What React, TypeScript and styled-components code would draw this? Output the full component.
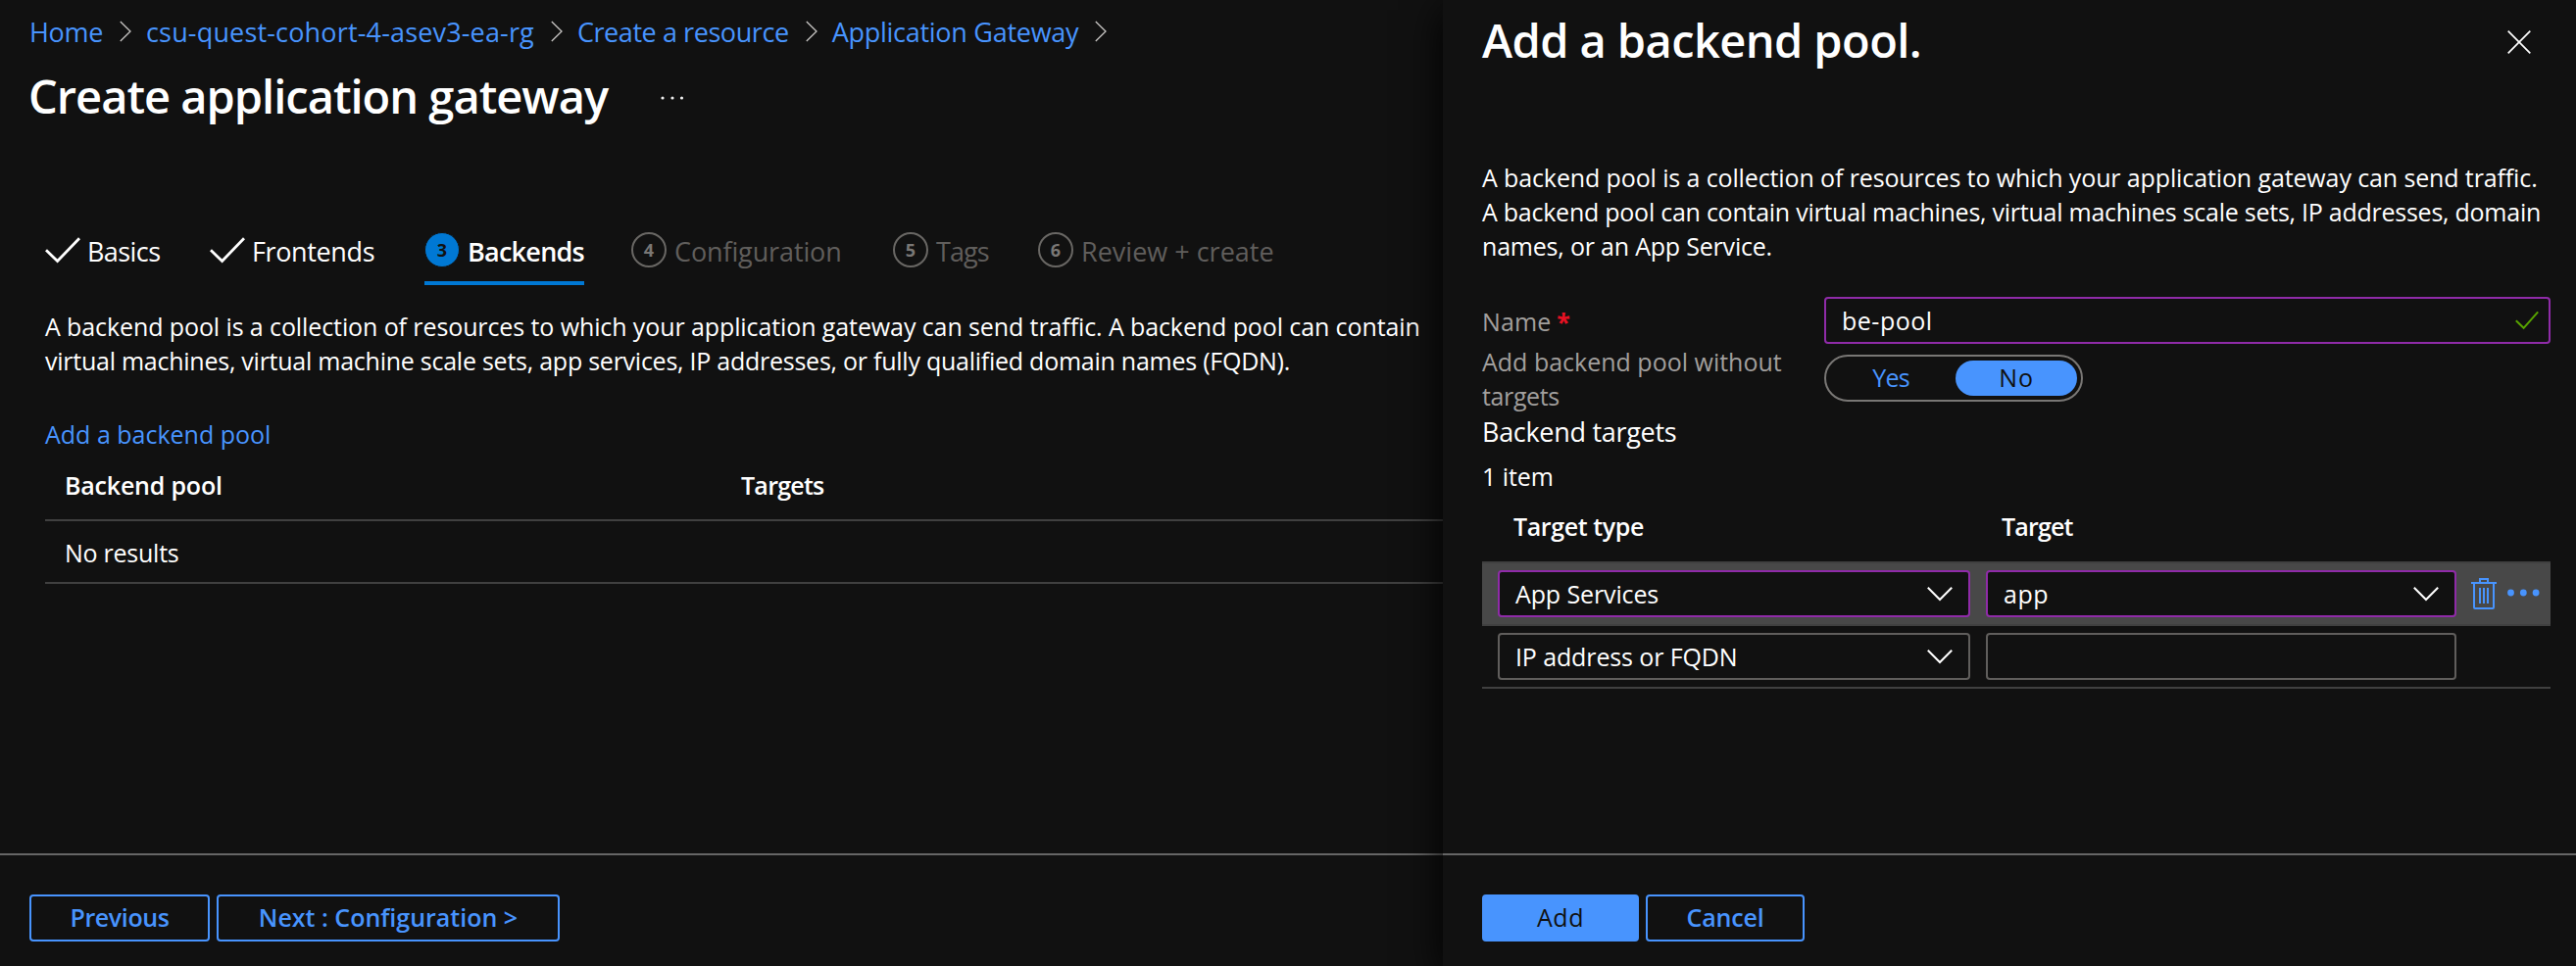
import React from "react";
import styled, { createGlobalStyle } from "styled-components";

const GlobalStyle = createGlobalStyle`
  * { box-sizing: border-box; }
  body {
    margin: 0;
    background: #111111;
    color: #ffffff;
    font: 400 25px/35px "Open Sans", "Noto Sans", sans-serif;
    overflow: hidden;
  }
`;

const Page = styled.div`
  display: flex;
  width: 2628px;
  height: 986px;
`;

const Blade = styled.main`
  display: flex;
  flex-direction: column;
  width: 1472px;
  padding-top: 14px;
`;

const ContextPane = styled.aside`
  position: relative;
  z-index: 1;
  display: flex;
  flex-direction: column;
  width: 1156px;
  padding-top: 9px;
  background: #111111;
  box-shadow: 0 10px 38px rgba(0, 0, 0, 1);
`;

const Text = styled.span<{ $ls?: number }>`
  letter-spacing: ${(p) => p.$ls ?? 0}px;
  white-space: nowrap;
`;

const Breadcrumb = styled.nav`
  display: flex;
  align-items: center;
  height: 38px;
  padding-left: 30px;
  font-size: 27px;
  line-height: 38px;
  color: #4894fe;

  svg {
    margin: -2px 15px 0 17px;
  }
`;

const Crumb = styled.div`
  display: flex;
  align-items: center;
`;

const TitleRow = styled.div`
  display: flex;
  align-items: center;
  height: 64px;
  margin-top: 14px;
  padding-left: 29px;
  gap: 54px;

  svg {
    margin-top: 4px;
  }
`;

const Title = styled.h1<{ $ls: number }>`
  margin: 0;
  font-size: 47px;
  font-weight: 600;
  line-height: 64px;
  letter-spacing: ${(p) => p.$ls}px;
  white-space: nowrap;
`;

const Tabs = styled.div`
  display: flex;
  gap: 48px;
  margin: 106px 0 0 46px;
`;

const Tab = styled.div<{ $width: number; $state: "done" | "active" | "disabled" }>`
  display: flex;
  gap: ${(p) => (p.$state === "done" ? 7 : 8)}px;
  width: ${(p) => p.$width}px;
  height: 55px;
  border-bottom: 4px solid ${(p) => (p.$state === "active" ? "#0078d4" : "transparent")};
  color: ${(p) => (p.$state === "disabled" ? "#605e5c" : "#ffffff")};
  font-size: 27px;
  font-weight: ${(p) => (p.$state === "active" ? 600 : 400)};
  line-height: 42px;
  white-space: nowrap;

  > svg {
    margin-top: 6px;
  }
`;

const StepNumber = styled.span<{ $active: boolean }>`
  display: flex;
  flex: none;
  align-items: center;
  justify-content: center;
  width: 36px;
  height: 36px;
  margin-top: 1px;
  border: ${(p) => (p.$active ? "1px solid #111111" : "2px solid #696764")};
  border-radius: 50%;
  background: ${(p) => (p.$active ? "#0078d4" : "transparent")};
  color: ${(p) => (p.$active ? "#111111" : "#797775")};
  font-size: 18px;
  font-weight: 700;
  line-height: 24px;
`;

const Intro = styled.p`
  display: flex;
  flex-direction: column;
  margin: 25px 0 0 46px;
`;

const AddLink = styled.a`
  margin: 40px 0 0 46px;
  color: #4894fe;
`;

const PoolTable = styled.div`
  margin: 17px 0 0 46px;
`;

const PoolHeader = styled.div`
  display: grid;
  grid-template-columns: 690px 1fr;
  height: 54px;
  padding-left: 20px;
  border-bottom: 2px solid #404040;
  font-weight: 600;
`;

const PoolRow = styled.div`
  height: 64px;
  padding: 15px 0 0 20px;
  border-bottom: 2px solid #404040;
`;

const Footer = styled.footer<{ $inset: number }>`
  display: flex;
  gap: 7px;
  height: 115px;
  margin-top: auto;
  padding: 40px 0 0 ${(p) => p.$inset}px;
  border-top: 2px solid #666666;
`;

const Button = styled.button<{ $width: number; $primary?: boolean; $ls?: number }>`
  width: ${(p) => p.$width}px;
  height: 48px;
  padding: 0 0 3px;
  border: 2px solid #4894fe;
  border-radius: 4px;
  background: ${(p) => (p.$primary ? "#4894fe" : "transparent")};
  color: ${(p) => (p.$primary ? "#111111" : "#4894fe")};
  font: ${(p) => (p.$primary ? 500 : 600)} 25px/40px "Open Sans", "Noto Sans", sans-serif;
  letter-spacing: ${(p) => p.$ls ?? 0}px;
`;

const PaneHeader = styled.header`
  display: flex;
  justify-content: space-between;
  align-items: flex-start;
  height: 64px;
  padding: 0 46px 0 40px;

  svg {
    margin-top: 22px;
  }
`;

const PaneBody = styled.section`
  width: 1090px;
  margin: 91px 0 0 40px;
`;

const Description = styled.p`
  display: flex;
  flex-direction: column;
  margin: 0 0 34px;
`;

const Field = styled.div`
  display: grid;
  grid-template-columns: 349px 1fr;
  align-items: start;
`;

const Label = styled.label<{ $top?: number }>`
  display: flex;
  flex-direction: column;
  padding-top: ${(p) => p.$top ?? 0}px;
  color: #a19f9d;
`;

const Required = styled.span`
  margin-left: 6px;
  color: #e81123;
  font-weight: 700;
`;

const Control = styled.div<{ $width: number; $dirty?: boolean; $pad?: number }>`
  display: flex;
  flex: none;
  align-items: center;
  justify-content: space-between;
  width: ${(p) => p.$width}px;
  height: 48px;
  padding: 0 16px 0 ${(p) => p.$pad ?? 16}px;
  border: 2px solid ${(p) => (p.$dirty ? "#8f2ba8" : "#605e5c")};
  border-radius: 4px;
  background: #111111;
`;

const NameControl = styled(Control)`
  padding-right: 10px;
`;

const Toggle = styled.div`
  display: flex;
  gap: 4px;
  width: 264px;
  height: 48px;
  margin-top: 10px;
  padding: 4px;
  border: 2px solid #797775;
  border-radius: 24px;
`;

const ToggleOption = styled.div<{ $on?: boolean }>`
  width: 124px;
  height: 36px;
  border-radius: 18px;
  background: ${(p) => (p.$on ? "#4894fe" : "transparent")};
  color: ${(p) => (p.$on ? "#111111" : "#4894fe")};
  line-height: 35px;
  text-align: center;
`;

const SecondField = styled(Field)`
  margin-top: 1px;
`;

const SectionTitle = styled.div`
  margin-top: 1px;
  font-size: 27px;
  line-height: 36px;
`;

const ItemCount = styled.div`
  margin-top: 10px;
`;

const TargetHeader = styled.div`
  display: grid;
  grid-template-columns: 498px 1fr;
  height: 53px;
  margin-top: 16px;
  padding-left: 32px;
  font-weight: 600;
`;

const TargetRow = styled.div<{ $selected?: boolean }>`
  display: flex;
  gap: 16px;
  padding: 7px 0 7px 16px;
  border-top: ${(p) => (p.$selected ? "2px solid #404040" : "none")};
  border-bottom: 2px solid #404040;
  background: ${(p) => (p.$selected ? "#484848" : "transparent")};
`;

const RowActions = styled.div`
  display: flex;
  gap: 11px;
  height: 48px;
  margin-left: -1px;
  padding-top: 8px;

  svg + svg {
    margin-top: 11px;
  }
`;

const CrumbChevron = () => (
  <svg width="12" height="22" viewBox="0 0 12 22" fill="none" stroke="#c8c6c4" strokeWidth="1.3">
    <path d="M.8 1 11 11 .8 21" />
  </svg>
);

const DoneCheck = () => (
  <svg width="36" height="27" viewBox="0 0 36 27" fill="none" stroke="#fff" strokeWidth="2.8">
    <path d="M1 13.2 12.6 24.5 35 1.2" />
  </svg>
);

const DropChevron = () => (
  <svg width="26" height="16" viewBox="0 0 26 16" fill="none" stroke="#fff" strokeWidth="2">
    <path d="M.8 1.8 13 14 25.2 1.8" />
  </svg>
);

const ValidCheck = () => (
  <svg width="24" height="20" viewBox="0 0 24 20" fill="none" stroke="#57a300" strokeWidth="2">
    <path d="M.8 10.2 8.6 17.8 23.2 1.4" />
  </svg>
);

const CloseIcon = () => (
  <svg width="24" height="24" viewBox="0 0 24 24" fill="none" stroke="#fff" strokeWidth="1.7">
    <path d="M.7.7 23.3 23.3M23.3.7.7 23.3" />
  </svg>
);

const TitleDots = () => (
  <svg width="24" height="4" viewBox="0 0 24 4" fill="#f0f0f0">
    <circle cx="2" cy="2" r="1.6" />
    <circle cx="12" cy="2" r="1.6" />
    <circle cx="21.5" cy="2" r="1.6" />
  </svg>
);

const TrashIcon = () => (
  <svg width="26" height="32" viewBox="0 0 26 32" fill="none" stroke="#4894fe" strokeWidth="2">
    <path d="M0 5h26M9 4V1h8v3M3 6v24q0 1 1 1h18q1 0 1-1V6M9 10v16M13 10v16M17 10v16" />
  </svg>
);

const MoreIcon = () => (
  <svg width="33" height="8" viewBox="0 0 33 8" fill="#4894fe">
    <circle cx="3.5" cy="4" r="3.4" />
    <circle cx="16.3" cy="4" r="3.4" />
    <circle cx="29.1" cy="4" r="3.4" />
  </svg>
);

const crumbs = [
  { label: "Home", ls: -0.32 },
  { label: "csu-quest-cohort-4-asev3-ea-rg", ls: 0.16 },
  { label: "Create a resource", ls: -0.43 },
  { label: "Application Gateway", ls: -0.27 },
];

const steps = [
  { label: "Basics", state: "done", width: 120, ls: -0.57 },
  { label: "Frontends", state: "done", width: 171, ls: -0.37 },
  { label: "Backends", state: "active", width: 163, ls: -0.75 },
  { label: "Configuration", state: "disabled", width: 219, ls: -0.12 },
  { label: "Tags", state: "disabled", width: 100, ls: -0.94 },
  { label: "Review + create", state: "disabled", width: 240, ls: 0 },
] as const;

export default function App() {
  return (
    <>
      <GlobalStyle />
      <Page>
        <Blade>
          <Breadcrumb>
            {crumbs.map((c) => (
              <Crumb key={c.label}>
                <Text $ls={c.ls}>{c.label}</Text>
                <CrumbChevron />
              </Crumb>
            ))}
          </Breadcrumb>
          <TitleRow>
            <Title $ls={-1}>Create application gateway</Title>
            <TitleDots />
          </TitleRow>
          <Tabs>
            {steps.map((s, i) => (
              <Tab key={s.label} $width={s.width} $state={s.state}>
                {s.state === "done" ? (
                  <DoneCheck />
                ) : (
                  <StepNumber $active={s.state === "active"}>{i + 1}</StepNumber>
                )}
                <Text $ls={s.ls}>{s.label}</Text>
              </Tab>
            ))}
          </Tabs>
          <Intro>
            <Text $ls={-0.1}>
              A backend pool is a collection of resources to which your application gateway can send traffic. A backend pool can contain
            </Text>
            <Text $ls={-0.25}>
              virtual machines, virtual machine scale sets, app services, IP addresses, or fully qualified domain names (FQDN).
            </Text>
          </Intro>
          <AddLink>
            <Text $ls={0}>Add a backend pool</Text>
          </AddLink>
          <PoolTable>
            <PoolHeader>
              <Text $ls={-0.2}>Backend pool</Text>
              <Text $ls={-0.75}>Targets</Text>
            </PoolHeader>
            <PoolRow>
              <Text $ls={-0.25}>No results</Text>
            </PoolRow>
          </PoolTable>
          <Footer $inset={30}>
            <Button $width={184} $ls={-0.4}>Previous</Button>
            <Button $width={350} $ls={0}>Next : Configuration &gt;</Button>
          </Footer>
        </Blade>

        <ContextPane>
          <PaneHeader>
            <Title $ls={-0.58}>Add a backend pool.</Title>
            <CloseIcon />
          </PaneHeader>
          <PaneBody>
            <Description>
              <Text $ls={-0.12}>
                A backend pool is a collection of resources to which your application gateway can send traffic.
              </Text>
              <Text $ls={-0.25}>
                A backend pool can contain virtual machines, virtual machines scale sets, IP addresses, domain
              </Text>
              <Text $ls={-0.2}>names, or an App Service.</Text>
            </Description>
            <Field>
              <Label $top={8}>
                <Text $ls={0.1}>
                  Name<Required>*</Required>
                </Text>
              </Label>
              <NameControl $width={741} $dirty>
                <Text $ls={0.5}>be-pool</Text>
                <ValidCheck />
              </NameControl>
            </Field>
            <SecondField>
              <Label>
                <Text $ls={0}>Add backend pool without</Text>
                <Text $ls={-0.37}>targets</Text>
              </Label>
              <Toggle>
                <ToggleOption>
                  <Text $ls={-0.8}>Yes</Text>
                </ToggleOption>
                <ToggleOption $on>
                  <Text $ls={0.8}>No</Text>
                </ToggleOption>
              </Toggle>
            </SecondField>
            <SectionTitle>
              <Text $ls={-0.3}>Backend targets</Text>
            </SectionTitle>
            <ItemCount>
              <Text $ls={-0.07}>1 item</Text>
            </ItemCount>
            <TargetHeader>
              <Text $ls={-0.4}>Target type</Text>
              <Text $ls={-0.84}>Target</Text>
            </TargetHeader>
            <TargetRow $selected>
              <Control $width={482} $dirty>
                <Text $ls={-0.12}>App Services</Text>
                <DropChevron />
              </Control>
              <Control $width={480} $dirty>
                <Text $ls={0.5}>app</Text>
                <DropChevron />
              </Control>
              <RowActions>
                <TrashIcon />
                <MoreIcon />
              </RowActions>
            </TargetRow>
            <TargetRow>
              <Control $width={482}>
                <Text $ls={-0.12}>IP address or FQDN</Text>
                <DropChevron />
              </Control>
              <Control $width={480} />
            </TargetRow>
          </PaneBody>
          <Footer $inset={40}>
            <Button $width={160} $primary $ls={0.6}>Add</Button>
            <Button $width={162} $ls={-0.2}>Cancel</Button>
          </Footer>
        </ContextPane>
      </Page>
    </>
  );
}
